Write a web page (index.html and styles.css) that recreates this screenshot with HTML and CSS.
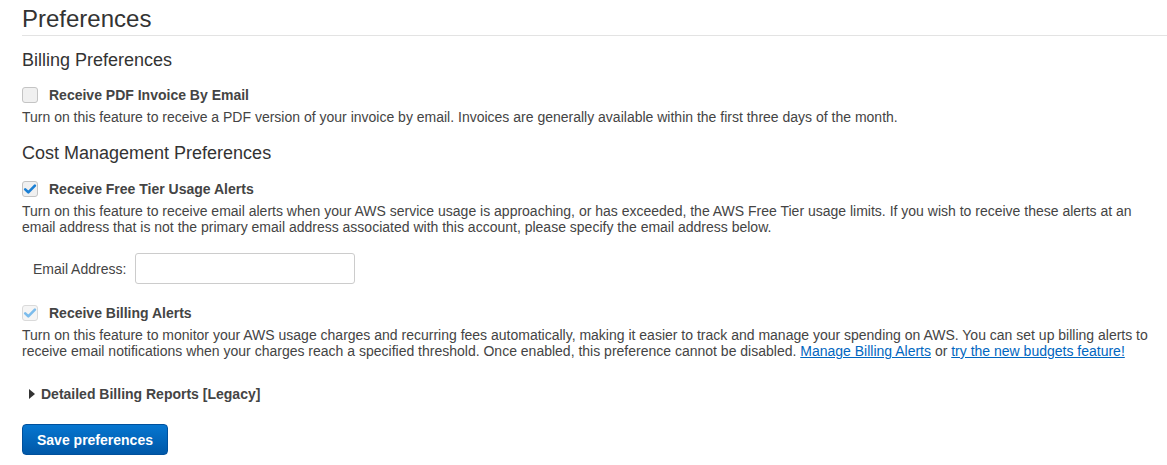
FILE: index.html
```html
<!DOCTYPE html>
<html>
<head>
<meta charset="utf-8">
<title>Preferences</title>
<link rel="stylesheet" href="styles.css">
</head>
<body>
<div class="page">
  <h1 class="title">Preferences</h1>

  <h2 class="section-title section-billing">Billing Preferences</h2>
  <div class="check-row row-pdf">
    <span class="checkbox"></span>
    <span class="check-label">Receive PDF Invoice By Email</span>
  </div>
  <p class="desc">Turn on this feature to receive a PDF version of your invoice by email. Invoices are generally available within the first three days of the month.</p>

  <h2 class="section-title section-cost">Cost Management Preferences</h2>
  <div class="check-row row-free">
    <span class="checkbox checked">
      <svg viewBox="0 0 16 16" width="16" height="16"><path d="M3.2 8.4 L6.3 11.3 L12.9 4.6" fill="none" stroke="#1a7fd4" stroke-width="2.6" stroke-linecap="round" stroke-linejoin="round"/></svg>
    </span>
    <span class="check-label">Receive Free Tier Usage Alerts</span>
  </div>
  <p class="desc">Turn on this feature to receive email alerts when your AWS service usage is approaching, or has exceeded, the AWS Free Tier usage limits. If you wish to receive these alerts at an email address that is not the primary email address associated with this account, please specify the email address below.</p>

  <div class="email-row">
    <label class="email-label" for="email">Email Address:</label>
    <input class="email-input" id="email" type="text">
  </div>

  <div class="check-row row-billing">
    <span class="checkbox checked disabled">
      <svg viewBox="0 0 16 16" width="16" height="16"><path d="M3.2 8.4 L6.3 11.3 L12.9 4.6" fill="none" stroke="#7cbcec" stroke-width="2.6" stroke-linecap="round" stroke-linejoin="round"/></svg>
    </span>
    <span class="check-label">Receive Billing Alerts</span>
  </div>
  <p class="desc">Turn on this feature to monitor your AWS usage charges and recurring fees automatically, making it easier to track and manage your spending on AWS. You can set up billing alerts to receive email notifications when your charges reach a specified threshold. Once enabled, this preference cannot be disabled. <a href="#" class="link">Manage Billing Alerts</a> or <a href="#" class="link">try the new budgets feature!</a></p>

  <div class="expander">
    <span class="caret"></span>
    <span class="expander-label">Detailed Billing Reports [Legacy]</span>
  </div>

  <div class="actions">
    <button class="btn-primary" type="button">Save preferences</button>
  </div>
</div>
</body>
</html>
```

FILE: styles.css
```css
html, body {
  margin: 0;
  padding: 0;
  background: #ffffff;
}

body {
  font-family: "Liberation Sans", Arial, sans-serif;
  color: #444444;
}

.page {
  padding: 4px 0 0 22px;
}

.title {
  margin: 0;
  font-size: 24px;
  font-weight: normal;
  line-height: 30px;
  color: #333333;
  padding-bottom: 1px;
  border-bottom: 1px solid #e3e3e3;
}

.section-title {
  margin: 0;
  font-size: 18px;
  font-weight: normal;
  line-height: 24px;
  color: #333333;
}

.section-billing {
  margin-top: 12px;
}

.section-cost {
  margin-top: 16px;
}

.check-row {
  display: flex;
  align-items: center;
  gap: 11px;
  height: 16px;
}

.row-pdf {
  margin-top: 15px;
}

.row-free {
  margin-top: 16px;
}

.row-billing {
  margin-top: 21px;
}

.checkbox {
  box-sizing: border-box;
  width: 16px;
  height: 16px;
  border: 1px solid #c4c4c4;
  border-radius: 3px;
  background: #f0f0f0;
  display: flex;
  align-items: center;
  justify-content: center;
  flex: none;
}

.checkbox svg {
  display: block;
  margin: -1px;
}

.checkbox.disabled {
  border-color: #dadada;
  background: #f5f5f5;
}

.check-label {
  font-size: 14px;
  font-weight: bold;
  line-height: 16px;
  color: #444444;
}

.desc {
  margin: 6px 0 0 0;
  font-size: 14px;
  line-height: 16px;
  color: #444444;
}

.link {
  color: #0066c0;
  text-decoration: underline;
}

.email-row {
  display: flex;
  align-items: center;
  gap: 9px;
  margin-top: 18px;
  padding-left: 11px;
}

.email-label {
  font-size: 14px;
  color: #444444;
}

.email-input {
  box-sizing: border-box;
  width: 220px;
  height: 31px;
  border: 1px solid #cccccc;
  border-radius: 3px;
  background: #ffffff;
  font-family: "Liberation Sans", Arial, sans-serif;
  font-size: 14px;
  padding: 0 8px;
  margin: 0;
}

.expander {
  display: flex;
  align-items: center;
  gap: 6px;
  margin-top: 25px;
  padding-left: 7px;
  height: 20px;
}

.caret {
  width: 0;
  height: 0;
  border-top: 5px solid transparent;
  border-bottom: 5px solid transparent;
  border-left: 6px solid #333333;
  flex: none;
}

.expander-label {
  font-size: 14px;
  font-weight: bold;
  line-height: 20px;
  color: #444444;
}

.actions {
  margin-top: 20px;
}

.btn-primary {
  box-sizing: border-box;
  height: 31px;
  padding: 0 14px;
  border: 1px solid #00509c;
  border-radius: 4px;
  background: linear-gradient(#0676d0, #0058a8);
  color: #ffffff;
  font-family: "Liberation Sans", Arial, sans-serif;
  font-size: 14px;
  font-weight: bold;
  cursor: pointer;
}
```
